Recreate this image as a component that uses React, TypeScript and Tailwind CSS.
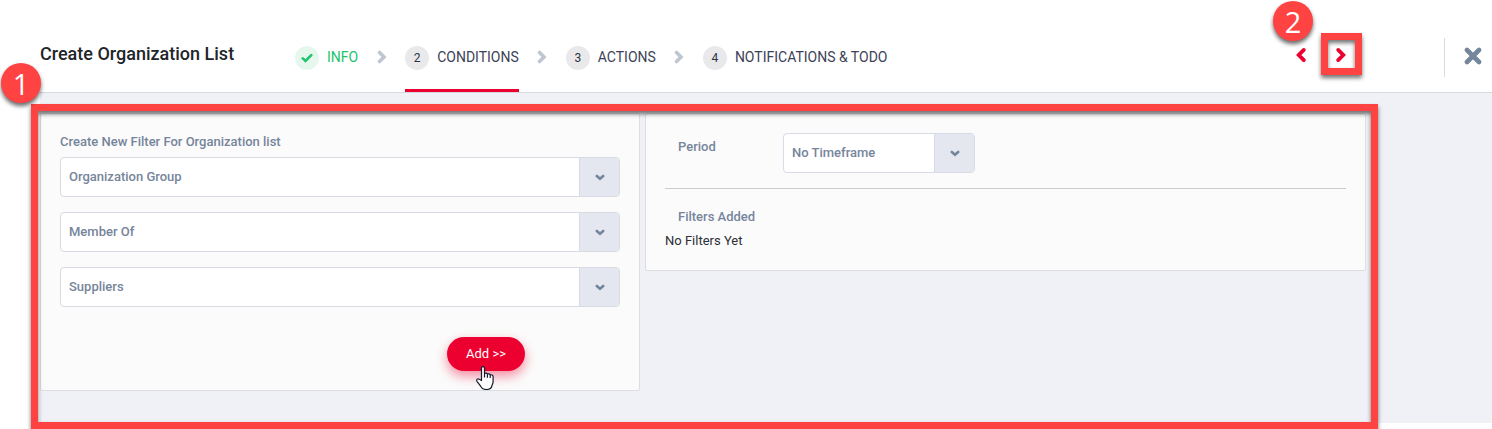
import React from "react";

function Chevron({ className, left, width }: { className: string; left?: boolean; width: number }) {
  return (
    <svg viewBox="0 0 12 16" className={className} fill="none" stroke="currentColor" strokeWidth={width} strokeLinecap="round" strokeLinejoin="miter" aria-hidden="true">
      <path d={left ? "M8.500 3.500 4 8l4.500 4.500" : "M3.500 3.500 8 8l-4.500 4.500"} />
    </svg>
  );
}

function DropDown({ label, value, options }: { label: string; value: string; options?: string[] }) {
  return (
    <div className="relative flex h-10 overflow-hidden rounded border border-[#d8dbe3] bg-white">
      <select aria-label={label} defaultValue={value} className="min-w-0 flex-1 appearance-none bg-transparent pl-2 text-[13px] font-medium text-[#76859b] outline-none">
        {(options ?? [value]).map((o) => (
          <option key={o}>{o}</option>
        ))}
      </select>
      <span className="pointer-events-none absolute inset-y-0 right-0 flex w-10 items-center justify-center border-l border-[#d8dbe3] bg-[#e4e7ef] text-[#74869c]">
        <svg viewBox="0 0 10 8" className="h-2 w-[10px]" fill="none" stroke="currentColor" strokeWidth="2.6" strokeLinecap="round" aria-hidden="true">
          <path d="M1.800 3l3.200 2.800L8.200 3" />
        </svg>
      </span>
    </div>
  );
}

function Marker({ n, className }: { n: number; className: string }) {
  return (
    <span className={"absolute z-20 flex size-10 items-center justify-center rounded-full bg-[#ff4343] font-['Open_Sans',sans-serif] text-[29px] leading-none text-white shadow-[0_3px_4px_rgba(0,0,0,0.6)] " + className}>
      {n}
    </span>
  );
}

const steps = [
  { n: 1, name: "INFO", state: "done" },
  { n: 2, name: "CONDITIONS", state: "active" },
  { n: 3, name: "ACTIONS", state: "next" },
  { n: 4, name: "NOTIFICATIONS & TODO", state: "next" },
];

export default function App() {
  return (
    <div className="relative min-h-screen overflow-hidden bg-white pb-[6px] pl-10 font-[Roboto,sans-serif]">
      <header className="flex h-[93px] border-b border-[#d5d9de]">
        <h1 className="w-[255px] shrink-0 pt-[42px] text-lg leading-6 font-medium text-[#212529]">Create Organization List</h1>
        <nav aria-label="Steps" className="flex-1">
          <ol className="flex h-full">
            {steps.map((s, i) => (
              <li key={s.n} className="flex">
                <a
                  href={"#step-" + s.n}
                  aria-current={s.state === "active" ? "step" : undefined}
                  className={
                    "flex items-start gap-2 border-b-3 pt-[46px] whitespace-nowrap " +
                    (s.state === "active" ? "border-[#ec0030] text-[#3c4257]" : s.state === "done" ? "border-transparent text-[#20c46c]" : "border-transparent text-[#3c4257]")
                  }
                >
                  {s.state === "done" ? (
                    <span className="flex size-6 items-center justify-center rounded-full bg-[#e6f8ee]">
                      <svg viewBox="0 0 12 10" className="h-[10px] w-3" fill="none" stroke="currentColor" strokeWidth="2.6" strokeLinecap="round" aria-hidden="true">
                        <path d="M1.800 5.400l2.700 2.500 5.800-5.800" />
                      </svg>
                    </span>
                  ) : (
                    <span className="flex size-6 items-center justify-center rounded-full bg-[#e9e9eb] text-xs text-[#2f3447]">{s.n}</span>
                  )}
                  <span className="text-sm leading-[22px]">{s.name}</span>
                </a>
                {i < steps.length - 1 && (
                  <span className="flex w-[47px] justify-center pt-[49px] text-[#bec6d0]">
                    <Chevron className="h-4 w-3" width={3.6} />
                  </span>
                )}
              </li>
            ))}
          </ol>
        </nav>
        <div className="flex items-start pt-[35px] text-[#ec0030]">
          <button type="button" aria-label="Previous step" className="flex size-10 items-center justify-center">
            <Chevron className="h-[18px] w-[14px]" left width={3.4} />
          </button>
          <div className="relative">
            <button type="button" aria-label="Next step" className="flex size-10 items-center justify-center">
              <Chevron className="h-[18px] w-[14px]" width={3.4} />
            </button>
            <span className="pointer-events-none absolute -top-[2px] left-0 h-[42px] w-[41px] border-7 border-[#ff4343] drop-shadow-[0_3px_2px_rgba(0,0,0,0.55)]" />
            <Marker n={2} className="-top-[34px] -left-12" />
          </div>
        </div>
        <div className="mt-[38px] ml-[83px] flex h-[39px] w-12 items-center justify-end border-l border-[#d8dbe0] pr-[10px]">
          <button type="button" aria-label="Close" className="pb-[3px] text-[#74869c]">
            <svg viewBox="0 0 18 18" className="size-[18px]" fill="none" stroke="currentColor" strokeWidth="4.600" strokeLinecap="round" aria-hidden="true">
              <path d="M3 3l12 12M15 3L3 15" />
            </svg>
          </button>
        </div>
      </header>

      <main className="relative min-h-[330px] bg-[#f0f1f6] pt-5 pr-[126px] pb-8">
        <div className="grid grid-cols-[600fr_721fr] items-start gap-[5px]">
          <section className="flex flex-col rounded-xs border border-[#dcdee0] bg-[#fbfbfb] px-[19px] pt-[18px] pb-[19px]">
            <h2 className="pb-[5px] text-[13px] leading-5 font-medium text-[#76859b]">Create New Filter For Organization list</h2>
            <div className="flex flex-col gap-[15px]">
              <DropDown label="Filter field" value="Organization Group" />
              <DropDown label="Filter condition" value="Member Of" />
              <DropDown label="Filter value" value="Suppliers" />
            </div>
            <div className="flex justify-end pt-[30px] pr-[95px]">
              <button type="button" className="relative h-[34px] w-[78px] rounded-full bg-[#ec0030] text-[13px] text-white shadow-[0_5px_12px_rgba(236,0,48,0.45)]">
                Add &gt;&gt;
                <svg viewBox="0 0 18 24" className="absolute top-[29px] left-[29px] h-6 w-[18px]" fill="#fff" stroke="#15172b" strokeWidth="1.2" strokeLinejoin="round" aria-hidden="true">
                  <path d="M5.5 14.5V2.2C5.5.2 8.5.2 8.5 2.2v5.3c.8-.8 2.6-.5 2.9.6.9-.6 2.5-.2 2.8.8 1-.4 2.9 0 2.9 1.6v5.2c0 1.800-.8 2.800-1.200 3.900-.3 2.400-2.400 3.900-5.600 3.900-3 0-4.700-1.300-5.700-3.300L1 15.300c-1-2 .8-3.200 2.300-2z" />
                  <path d="M8.500 7.500v4M11.400 8.200v3.500M14.200 9v3" fill="none" />
                </svg>
              </button>
            </div>
          </section>
          <section className="rounded-xs border border-[#dcdee0] bg-[#fbfbfb] px-[19px] pt-[19px] pb-[19px]">
            <div className="flex items-start pb-[15px] pl-[13px]">
              <span className="w-[105px] shrink-0 pt-1 text-[13px] leading-5 font-medium text-[#76859b]">Period</span>
              <div className="w-48">
                <DropDown label="Period" value="No Timeframe" />
              </div>
            </div>
            <hr className="border-[#cacbcd]" />
            <h2 className="pt-[18px] pl-[13px] text-[13px] leading-5 font-medium text-[#76859b]">Filters Added</h2>
            <p className="pt-1 text-[13px] leading-5 text-[#2b2f36]">No Filters Yet</p>
          </section>
        </div>
        <span className="pointer-events-none absolute top-[11px] right-[114px] -bottom-[6px] -left-[9px] z-10 border-7 border-[#ff4343] drop-shadow-[0_3px_2px_rgba(0,0,0,0.55)]" />
        <Marker n={1} className="-top-[30px] -left-[39px]" />
      </main>
    </div>
  );
}
